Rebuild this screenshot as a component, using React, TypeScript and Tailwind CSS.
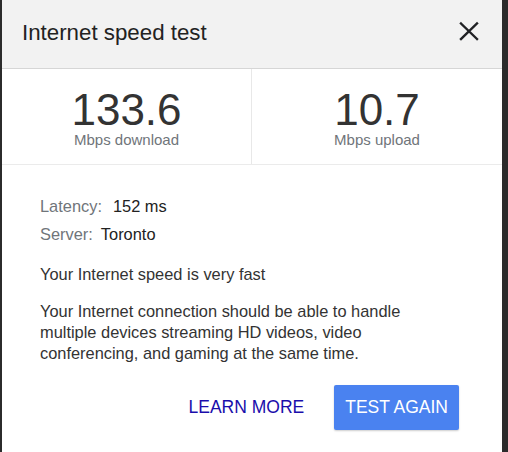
import React from "react";

const stats = [
  { value: "133.6", label: "Mbps download" },
  { value: "10.7", label: "Mbps upload" },
];

const App = () => {
  return (
    <div className="flex h-[452px] w-[508px] overflow-hidden bg-[#2b2b2b] pl-[2px] font-['Liberation_Sans',Arial,sans-serif]">
      <div className="flex w-[500px] flex-col bg-white">
        {/* header */}
        <div className="flex h-[69px] items-center justify-between border-b border-[#d6d6d6] bg-[#f2f2f2] pl-[20px] pr-[23px]">
          <p className="-mt-[2px] text-[22.3px] leading-[28px] text-[#222]">Internet speed test</p>
          <button className="-mt-[7px] flex h-[20px] w-[20px] items-center justify-center">
            <svg width="20" height="20" viewBox="0 0 20 20">
              <path d="M2 2.5 L18 18 M18 2.5 L2 18" stroke="#202124" strokeWidth="2.4" strokeLinecap="square" />
            </svg>
          </button>
        </div>

        {/* stats */}
        <div className="grid grid-cols-2 border-b border-[#ebebeb]">
          {stats.map((s, i) => (
            <div
              key={i}
              className={`flex flex-col items-center pt-[20px] pb-[16px] ${i === 0 ? "border-r border-[#e8e8e8]" : ""}`}
            >
              <span className="text-[44px] leading-[42px] text-[#333]">{s.value}</span>
              <span className="text-[15px] leading-[17px] text-[#70757a]">{s.label}</span>
            </div>
          ))}
        </div>

        {/* body */}
        <div className="flex flex-col pl-[38px] pr-[35px] pt-[27px] text-[16.4px] text-[#333]">
          <div className="leading-[28px]">
            <span className="text-[#70757a]">Latency:</span>
            <span className="ml-[11px] text-[#222]">152 ms</span>
          </div>
          <div className="leading-[28px]">
            <span className="text-[#70757a]">Server:</span>
            <span className="ml-[8px] text-[#222]">Toronto</span>
          </div>
          <p className="mt-[12px] leading-[28px]">Your Internet speed is very fast</p>
          <p className="mt-[13px] w-[415px] leading-[21px]">
            Your Internet connection should be able to handle multiple devices streaming HD videos, video
            conferencing, and gaming at the same time.
          </p>
          <div className="mt-[21px] mr-[8px] flex items-center justify-end gap-[19px]">
            <button className="h-[45px] px-[11px] text-[17.5px] text-[#1a0dab]">LEARN MORE</button>
            <button className="h-[45px] rounded-[2px] bg-[#4a82f0] px-[11px] text-[17.5px] text-white shadow-[0_1px_2px_rgba(0,0,0,0.2)]">
              TEST AGAIN
            </button>
          </div>
        </div>
      </div>
      <div className="flex-1" />
    </div>
  );
};

export default App;
